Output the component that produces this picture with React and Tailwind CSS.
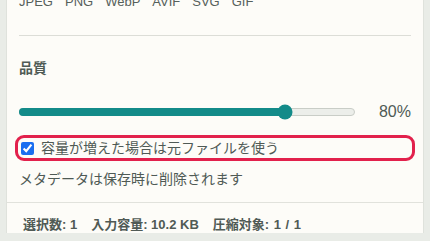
const formats = ["JPEG", "PNG", "WebP", "AVIF", "SVG", "GIF"];

function QualitySlider({ value }) {
  return (
    <div className="flex items-center">
      <div className="relative h-[8px] w-[336px] rounded-full border border-[#c9cdc7] bg-[#eceeea]">
        <div
          className="absolute -left-px -top-px h-[8px] rounded-full bg-[#138b89]"
          style={{ width: `${value * 3.36 - 3}px` }}
        />
        <div
          className="absolute top-1/2 h-[15px] w-[15px] -translate-x-1/2 -translate-y-1/2 rounded-full bg-[#138b89]"
          style={{ left: `${value * 3.36 - 4}px` }}
        />
      </div>
      <span className="ml-auto text-[16px] leading-5 text-[#4f5a55]">{value}%</span>
    </div>
  );
}

export default function App() {
  return (
    <div
      className="h-[241px] overflow-hidden bg-[#e9ece7] px-[6px]"
      style={{ fontFamily: '"Liberation Sans", "Noto Sans CJK JP", sans-serif' }}
    >
      <div className="h-full border-x border-[#dfe2dc] bg-[#fdfcf8]">
        <div className="px-[12px]">
          <div className="-mt-[8px] flex gap-3 text-[13px] leading-5 text-[#56605b]">
            {formats.map((f) => (
              <span key={f}>{f}</span>
            ))}
          </div>
          <div className="mt-[23px] h-px bg-[#dcddd7]" />
          <h3 className="mt-[22px] text-[14px] font-bold leading-5 text-[#4f5a55]">品質</h3>
          <div className="mt-[24px]">
            <QualitySlider value={80} />
          </div>
          <label className="-mx-[4px] mt-[13px] flex h-[26px] items-center gap-[7px] rounded-[9px] border-[3px] border-[#e2214c] pl-[3px] text-[14px] text-[#4f5a55]">
            <input type="checkbox" defaultChecked className="m-0 h-[13px] w-[13px] accent-[#1a6ef0]" />
            <span>容量が増えた場合は元ファイルを使う</span>
          </label>
          <p className="mt-[8px] text-[14px] leading-5 text-[#4f5a55]">メタデータは保存時に削除されます</p>
        </div>
        <div className="mt-[13px] border-t border-[#e1e2dc] px-[16px] pt-[12px]">
          <div className="flex gap-[14px] text-[13px] font-bold leading-5 text-[#505a55]">
            <span>選択数: 1</span>
            <span>入力容量: 10.2 KB</span>
            <span className="[word-spacing:1px]">圧縮対象: 1 / 1</span>
          </div>
        </div>
      </div>
    </div>
  );
}
